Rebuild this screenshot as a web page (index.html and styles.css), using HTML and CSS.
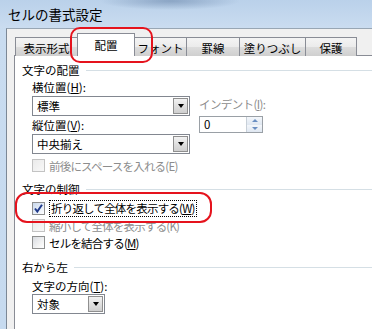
FILE: index.html
```html
<!DOCTYPE html>
<html lang="ja">
<head>
  <meta charset="UTF-8" />
  <title>セルの書式設定</title>
  <link rel="stylesheet" href="styles.css">
</head>
<body>
  <div class="window">
    <div class="titlebar">セルの書式設定</div>

    <div class="dialog">
      <div class="tabs">
        <div class="tab t1">表示形式</div>
        <div class="tab t2 active">配置</div>
        <div class="tab t3">フォント</div>
        <div class="tab t4">罫線</div>
        <div class="tab t5">塗りつぶし</div>
        <div class="tab t6">保護</div>
      </div>

      <div class="panel">
        <div class="group-head"><span>文字の配置</span><i class="rule"></i></div>
        <div class="group-body">
          <div class="align-row">
            <div class="align-col">
              <div class="label">横位置(<u>H</u>):</div>
              <div class="select wide"><span>標準</span><b class="drop"></b></div>
              <div class="label">縦位置(<u>V</u>):</div>
              <div class="select wide"><span>中央揃え</span><b class="drop"></b></div>
            </div>
            <div class="indent-col">
              <div class="label disabled narrow">インデント(<u>I</u>):</div>
              <div class="spin"><span>0</span><b class="spin-btns"><i class="up"></i><i class="down"></i></b></div>
            </div>
          </div>
          <div class="check disabled first"><i class="box"></i>前後にスペースを入れる(E)</div>
        </div>

        <div class="group-head gap"><span>文字の制御</span><i class="rule"></i></div>
        <div class="group-body">
          <div class="check wrap"><i class="box checked">
            <svg width="11" height="11" viewBox="0 0 11 11"><path d="M2 5.5 L4.3 8.5 L9 1.8" fill="none" stroke="#1f3a8a" stroke-width="2"/></svg>
          </i><span class="focus">折り返して全体を表示する(<u>W</u>)</span></div>
          <div class="check disabled">
            <i class="box"></i>縮小して全体を表示する(K)</div>
          <div class="check"><i class="box"></i>セルを結合する(<u>M</u>)</div>
        </div>

        <div class="group-head gap2"><span>右から左</span><i class="rule"></i></div>
        <div class="group-body">
          <div class="label dir">文字の方向(<u>T</u>):</div>
          <div class="select small"><span>対象</span><b class="drop"></b></div>
        </div>
      </div>
    </div>

    <div class="mark mark-tab"></div>
    <div class="mark mark-wrap"></div>
  </div>
</body>
</html>
```

FILE: styles.css
```css
body {
  margin: 0;
  overflow: hidden;
  font-family: 'Noto Sans CJK JP', 'Noto Sans', sans-serif;
  font-size: 11.5px;
  color: #000;
  background: #c3d7ee;
}

.window {
  position: relative;
  width: 372px;
  height: 329px;
  overflow: hidden;
  background: linear-gradient(#bcd2ea, #c9dcf0 30px, #c6daef);
}

.titlebar {
  height: 28px;
  box-sizing: border-box;
  padding: 5px 0 0 8px;
  font-size: 13.5px;
  line-height: 18px;
  background:
    radial-gradient(ellipse 70px 9px at 170px 1px, rgba(80, 110, 150, 0.45), rgba(80, 110, 150, 0)),
    linear-gradient(#bad1ea, #cadcf0);
}

.dialog {
  margin-left: 6px;
  height: 301px;
  box-sizing: border-box;
  border-left: 1px solid #7c8896;
  border-top: 1px solid #98a6b4;
  background: #f0f0f0;
  padding: 4px 0 0 7px;
}

/* pestañas */
.tabs {
  display: flex;
  align-items: flex-end;
  height: 23px;
  margin-left: 1px;
  margin-bottom: -1px;
}

.tab {
  height: 19px;
  box-sizing: border-box;
  border: 1px solid #898c95;
  border-bottom: none;
  margin-right: -1px;
  text-align: center;
  line-height: 20px;
  background: linear-gradient(#f4f4f4, #ebebeb 50%, #dddddd 50%, #cfcfcf);
}

.tab.active {
  position: relative;
  z-index: 1;
  height: 23px;
  line-height: 22px;
  background: #fff;
}

.t1 { width: 63px; }
.t2 { width: 58px; }
.t3 { width: 53px; }
.t4 { width: 54px; }
.t5 { width: 67px; }
.t6 { width: 52px; }

.panel {
  height: 300px;
  box-sizing: border-box;
  background: #fff;
  border-left: 1px solid #898c95;
  border-top: 1px solid #898c95;
  padding: 6px 0 0 7px;
}

.group-head {
  display: flex;
  align-items: center;
  height: 16px;
  line-height: 16px;
}

.group-head.gap { margin-top: 7px; }
.group-head.gap2 { margin-top: 8px; }

.group-head .rule {
  flex: 1;
  height: 1px;
  margin-left: 6px;
  background: #d5dfe5;
}

.group-body {
  padding-left: 10px;
}

.label {
  height: 16px;
  line-height: 16px;
  margin-top: 1px;
}

.label.dir { margin-top: 3px; }
.label.narrow { letter-spacing: -0.6px; }

.disabled { color: #8d8d8d; }

/* listas */
.align-row {
  display: flex;
}

.align-col {
  width: 158px;
}

.select {
  display: flex;
  height: 20px;
  box-sizing: border-box;
  margin-top: 1px;
  border: 1px solid #828790;
  background: #fff;
}

.select.wide { width: 158px; }
.select.small { width: 73px; margin-top: 0; }

.select span {
  flex: 1;
  padding-left: 4px;
  line-height: 18px;
}

.drop {
  width: 15px;
  margin: 1px;
  box-sizing: border-box;
  border: 1px solid #8f8f8f;
  background: linear-gradient(#f2f2f2, #e0e0e0 50%, #cfcfcf);
  display: flex;
  align-items: center;
  justify-content: center;
}

.drop::after {
  content: '';
  border-left: 3.5px solid transparent;
  border-right: 3.5px solid transparent;
  border-top: 4px solid #000;
}

.indent-col {
  margin-left: 9px;
  padding-top: 17px;
}

.spin {
  display: flex;
  width: 64px;
  height: 17px;
  box-sizing: border-box;
  margin-top: 4px;
  border: 1px solid #9aa0a6;
}

.spin span {
  flex: 1;
  padding-left: 4px;
  line-height: 15px;
}

.spin-btns {
  width: 15px;
  display: flex;
  flex-direction: column;
  border-left: 1px solid #c8d0d8;
}

.spin-btns i {
  flex: 1;
  display: flex;
  align-items: center;
  justify-content: center;
  background: linear-gradient(#f4f7fb, #dfe7f1);
}

.spin-btns .up::after {
  content: '';
  border-left: 3px solid transparent;
  border-right: 3px solid transparent;
  border-bottom: 3px solid #6b8fc2;
}

.spin-btns .down::after {
  content: '';
  border-left: 3px solid transparent;
  border-right: 3px solid transparent;
  border-top: 3px solid #6b8fc2;
}

/* casillas */
.check {
  display: flex;
  align-items: center;
  height: 17px;
  line-height: 16px;
  letter-spacing: -0.8px;
}

.check.first { margin-top: 3px; }
.check.wrap { margin-top: 2px; height: 18px; }

.box {
  width: 13px;
  height: 13px;
  box-sizing: border-box;
  margin-right: 4px;
  border: 1px solid #8e8f8f;
  background: linear-gradient(135deg, #d8dbe0, #f6f6f6 70%, #fff);
  display: flex;
  align-items: center;
  justify-content: center;
}

.check.disabled .box {
  border-color: #c3c3c3;
  background: linear-gradient(135deg, #eaeaea, #f8f8f8);
}

.box.checked {
  background: linear-gradient(135deg, #c9d8ec, #eef3fa 70%, #fff);
}

.focus {
  border: 1px dotted #000;
  padding: 0 1px;
  line-height: 15px;
}

/* marcas rojas */
.mark {
  position: absolute;
  border: 2px solid #e5131d;
  box-sizing: border-box;
}

.mark-tab {
  left: 70px;
  top: 27px;
  width: 83px;
  height: 36px;
  border-radius: 10px;
}

.mark-wrap {
  left: 15px;
  top: 192px;
  width: 197px;
  height: 31px;
  border-radius: 12px;
}
```
